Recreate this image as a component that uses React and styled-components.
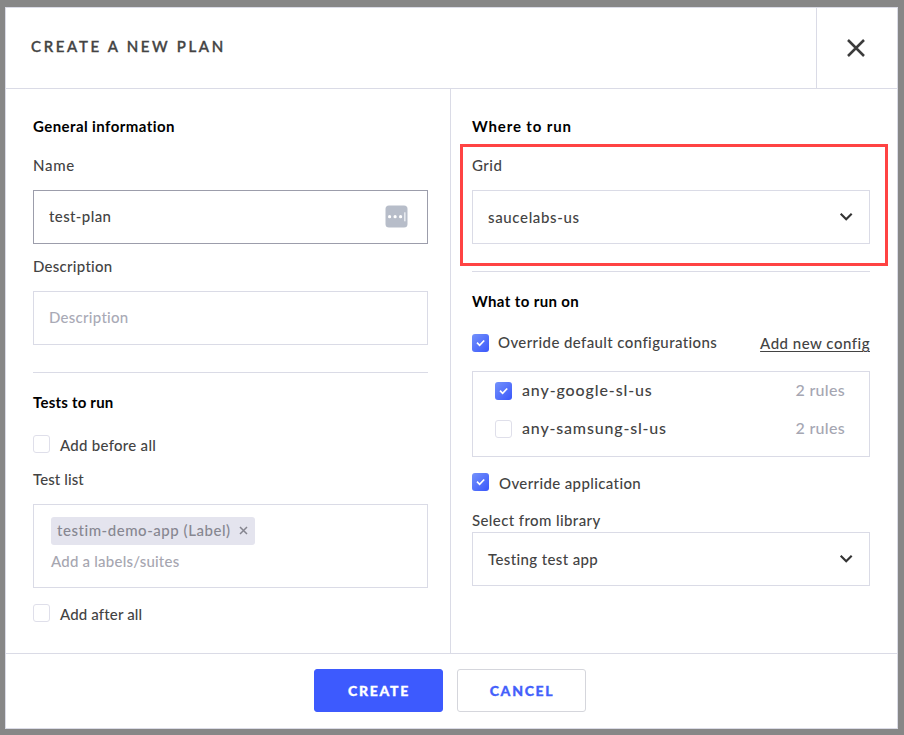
import React, { useState } from 'react';
import styled, { createGlobalStyle, css } from 'styled-components'

const line = '#dadbe6';

const GlobalStyle = createGlobalStyle`
  * {
    box-sizing: border-box;
  }
  body {
    margin: 0;
    background: #878787;
    color: #434343;
    font-family: Lato, "Open Sans", sans-serif;
    font-size: 15px;
    font-weight: 500;
    line-height: 20px;
  }
`

const Modal = styled.div`
  width: 893px;
  height: 722px;
  margin: 7px 0 0 5px;
  display: flex;
  flex-direction: column;
  background: #fff;
  border: 1px solid ${line};
`

const Header = styled.header`
  display: flex;
  height: 81px;
  border-bottom: 1px solid ${line};
`

const Title = styled.h1`
  flex: 1;
  margin: 0;
  padding: 28px 0 0 25px;
  font-size: 15px;
  font-weight: 500;
  line-height: 20px;
  letter-spacing: 2.67px;
  -webkit-text-stroke: 0.4px;
`

const CloseButton = styled.button`
  width: 81px;
  padding: 0 2px 0 0;
  display: flex;
  align-items: center;
  justify-content: center;
  background: none;
  border: 0;
  border-left: 1px solid ${line};
`

const Body = styled.main`
  flex: 1;
  display: grid;
  grid-template-columns: 445px 1fr;
`

const Column = styled.section`
  padding: 27px 27px 0 21px;

  &:first-child {
    padding: 27px 22px 0 27px;
    border-right: 1px solid ${line};
  }
`

const Text = styled.span`
  white-space: nowrap;
  letter-spacing: ${props => props.$spacing || 0.4}px;
`

const Heading = styled(Text).attrs({ as: 'h2' })`
  margin: 0;
  color: #000;
  font-size: 15px;
  font-weight: 700;
`

const Label = styled(Text).attrs({ as: 'label' })`
  display: block;
  margin: ${props => props.$top}px 0 ${props => props.$bottom ?? 15}px;
`

const Divider = styled.hr`
  height: 1px;
  margin: 27px 0 19px;
  background: ${line};
  border: 0;
`

const Field = styled.div`
  display: flex;
  align-items: center;
  justify-content: space-between;
  height: 54px;
  padding: 0 19px 2px 15px;
  border: 1px solid ${props => props.$focused ? '#9c9dab' : line};
  color: ${props => props.$empty ? '#a9aab6' : 'inherit'};
`

const Select = styled(Field)`
  padding: 0 16px 0 15px;
`

const Highlighted = styled.div`
  position: relative;

  &::after {
    content: '';
    position: absolute;
    top: -11px;
    right: -18px;
    bottom: -22px;
    left: -12px;
    border: 3px solid #ff4343;
    pointer-events: none;
  }
`

const CheckRow = styled.div`
  display: flex;
  align-items: flex-start;
  height: 20px;
  margin-top: ${props => props.$top || 0}px;
`

const Box = styled.button`
  flex: none;
  display: flex;
  align-items: center;
  justify-content: center;
  width: 17px;
  height: 18px;
  margin: ${props => props.$drop || 0}px ${props => props.$gap || 10}px 0 0;
  padding: 0;
  border: 1px solid #dfdfea;
  border-radius: 3px;
  background: #fff;
  ${props => props.$checked && css`
    border: 0;
    background: linear-gradient(135deg, #7492fb, #3a57fb);
  `}
`

const TagInput = styled.div`
  height: 84px;
  padding: 12px 17px;
  border: 1px solid ${line};
`

const Tag = styled.div`
  display: flex;
  align-items: center;
  justify-content: space-between;
  width: 204px;
  height: 28px;
  padding: 0 7px 2px 6px;
  background: #e4e4ee;
  border-radius: 3px;
  color: #878791;
`

const TagPlaceholder = styled.div`
  margin-top: 6px;
  color: #a6a6b0;
`

const ConfigLink = styled.a`
  margin: 1px 0 0 auto;
  white-space: nowrap;
  letter-spacing: 0.5px;
  text-decoration: underline;
  text-underline-offset: 2px;
  text-decoration-thickness: 1px;
`

const ConfigList = styled.div`
  display: flex;
  flex-direction: column;
  gap: 18px;
  height: 86px;
  margin-top: 19px;
  padding: 8px 24px 0 22px;
  border: 1px solid ${line};
  font-size: 16px;
`

const Rules = styled(Text)`
  margin-left: auto;
  color: #a5a6b2;
`

const Footer = styled.footer`
  display: flex;
  justify-content: center;
  gap: 14px;
  height: 75px;
  padding: 15px 3px 0 0;
  border-top: 1px solid ${line};
`

const Button = styled.button`
  width: 129px;
  height: 43px;
  padding: 0 0 0 1px;
  background: ${props => props.$primary ? '#3d5afe' : '#fff'};
  border: 1px solid ${props => props.$primary ? '#3d5afe' : '#d5d6dc'};
  border-radius: 3px;
  color: ${props => props.$primary ? '#fff' : '#4460fb'};
  font-family: inherit;
  font-size: 14px;
  font-weight: 900;
  letter-spacing: 1.7px;
  -webkit-text-stroke: 0.3px;
`

const Chevron = () => (
  <svg width="14" height="10" viewBox="0 0 14 10" fill="none">
    <path d="M1.7 1.8L7.2 7.3L12.7 1.8" stroke="#333" strokeWidth="2.1" />
  </svg>
)

const Cross = ({ size, color, width }) => (
  <svg width={size} height={size} viewBox={`0 0 ${size} ${size}`} fill="none">
    <path d={`M1 1L${size - 1} ${size - 1}M${size - 1} 1L1 ${size - 1}`} stroke={color} strokeWidth={width} />
  </svg>
)

const FillIcon = () => (
  <svg width="23" height="23" viewBox="0 0 23 23">
    <rect x="0.5" y="0.5" width="22" height="22" rx="3.5" fill="#b7bdc9" />
    <circle cx="4.6" cy="11.7" r="1.6" fill="#fff" />
    <circle cx="10.1" cy="11.7" r="1.6" fill="#fff" />
    <circle cx="15.6" cy="11.7" r="1.6" fill="#fff" />
    <rect x="19" y="7.3" width="1.6" height="9" fill="#e6e9ee" />
  </svg>
)

const Checkbox = ({ defaultChecked, ...rest }) => {
  const [checked, setChecked] = useState(!!defaultChecked);

  return (
    <Box $checked={checked} onClick={() => setChecked(!checked)} {...rest}>
      {checked && (
        <svg width="9" height="8" viewBox="0 0 9 8" fill="none">
          <path d="M1 3.7L3.6 6.3L8.2 1.5" stroke="#fff" strokeWidth="1.7" />
        </svg>
      )}
    </Box>
  )
}

const configs = [
  { name: 'any-google-sl-us', rules: 2, checked: true, spacing: 0.88 },
  { name: 'any-samsung-sl-us', rules: 2, checked: false, spacing: 0.82 },
];

function App() {
  return (
    <>
      <GlobalStyle />
      <Modal>
        <Header>
          <Title>CREATE A NEW PLAN</Title>
          <CloseButton>
            <Cross size={18} color="#3c3c3c" width={2.5} />
          </CloseButton>
        </Header>
        <Body>
          <Column>
            <Heading $spacing={0.42}>General information</Heading>
            <Label $top={19} $spacing={0.7}>Name</Label>
            <Field $focused>
              <Text $spacing={0.4}>test-plan</Text>
              <FillIcon />
            </Field>
            <Label $top={12} $spacing={0.28}>Description</Label>
            <Field $empty>
              <Text $spacing={0.28}>Description</Text>
            </Field>
            <Divider />
            <Heading $spacing={0.22}>Tests to run</Heading>
            <CheckRow $top={23}>
              <Checkbox />
              <Text $spacing={0.28}>Add before all</Text>
            </CheckRow>
            <Label $top={14} $spacing={0.1}>Test list</Label>
            <TagInput>
              <Tag>
                <Text $spacing={0.54}>testim-demo-app (Label)</Text>
                <Cross size={9} color="#85858f" width={1.5} />
              </Tag>
              <TagPlaceholder>
                <Text $spacing={0.22}>Add a labels/suites</Text>
              </TagPlaceholder>
            </TagInput>
            <CheckRow $top={16}>
              <Checkbox />
              <Text $spacing={0.15}>Add after all</Text>
            </CheckRow>
          </Column>
          <Column>
            <Heading $spacing={0.87}>Where to run</Heading>
            <Highlighted>
              <Label $top={19} $spacing={0.5}>Grid</Label>
              <Select>
                <Text $spacing={0.65}>saucelabs-us</Text>
                <Chevron />
              </Select>
            </Highlighted>
            <Divider />
            <Heading $spacing={0.38}>What to run on</Heading>
            <CheckRow $top={21}>
              <Checkbox defaultChecked $drop={2} $gap={9} />
              <Text $spacing={0.4}>Override default configurations</Text>
              <ConfigLink>Add new config</ConfigLink>
            </CheckRow>
            <ConfigList>
              {configs.map(config => (
                <CheckRow key={config.name}>
                  <Checkbox defaultChecked={config.checked} $drop={2} />
                  <Text $spacing={config.spacing}>{config.name}</Text>
                  <Rules $spacing={0.3}>{config.rules} rules</Rules>
                </CheckRow>
              ))}
            </ConfigList>
            <CheckRow $top={16}>
              <Checkbox defaultChecked />
              <Text $spacing={0.38}>Override application</Text>
            </CheckRow>
            <Label $top={17} $bottom={2} $spacing={0.4}>Select from library</Label>
            <Select>
              <Text $spacing={0.38}>Testing test app</Text>
              <Chevron />
            </Select>
          </Column>
        </Body>
        <Footer>
          <Button $primary>CREATE</Button>
          <Button>CANCEL</Button>
        </Footer>
      </Modal>
    </>
  )
}

export default App;
